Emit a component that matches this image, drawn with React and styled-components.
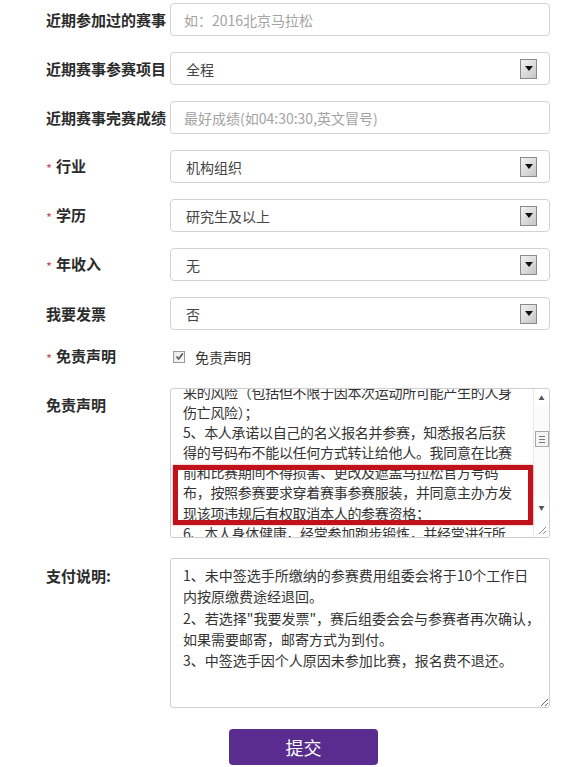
import React from 'react';
import styled, { createGlobalStyle } from 'styled-components';

const GlobalStyle = createGlobalStyle`
  html, body {
    margin: 0;
    padding: 0;
    background: #fff;
  }
  body {
    font-family: "Noto Sans CJK SC", "Liberation Sans", sans-serif;
    color: #333;
  }
`;

const Form = styled.form`
  padding: 3px 0 0 46px;
  width: 504px;
`;

const Row = styled.div`
  display: flex;
  align-items: ${(p) => (p.top ? 'flex-start' : 'center')};
  margin-bottom: ${(p) => p.gap || 16}px;
`;

const Label = styled.div`
  width: 124px;
  flex: none;
  font-size: 15px;
  font-weight: 700;
  line-height: 20px;
  color: #2b2b2b;
  white-space: nowrap;
  padding-top: ${(p) => p.pad || 0}px;
`;

const Star = styled.span`
  color: #c8505a;
  font-size: 13px;
  font-weight: 400;
  margin-right: 4px;
  position: relative;
  top: 2px;
`;

const Input = styled.input`
  box-sizing: border-box;
  width: 380px;
  height: 33px;
  border: 1px solid #d2d2d2;
  border-radius: 4px;
  padding: 0 13px;
  font-family: inherit;
  font-size: 14px;
  color: #444;
  outline: none;
  &::placeholder {
    color: #a3a3a3;
  }
`;

const SelectBox = styled.div`
  box-sizing: border-box;
  width: 380px;
  height: 33px;
  border: 1px solid #d2d2d2;
  border-radius: 4px;
  padding: 0 12px 0 15px;
  display: flex;
  align-items: center;
  justify-content: space-between;
  font-size: 14px;
  color: #444;
`;

const ArrowBox = styled.span`
  box-sizing: border-box;
  width: 17px;
  height: 20px;
  border: 1px solid #8a8a8a;
  background: linear-gradient(135deg, #f2f2f2 0%, #d8d8d8 60%, #c4c4c4 100%);
  display: flex;
  align-items: center;
  justify-content: center;
`;

const Caret = styled.span`
  width: 0;
  height: 0;
  border-left: 4px solid transparent;
  border-right: 4px solid transparent;
  border-top: 5px solid #111;
`;

const CheckLine = styled.label`
  display: flex;
  align-items: center;
  height: 20px;
  font-size: 14px;
  color: #333;
`;

const CheckMark = styled.span`
  box-sizing: border-box;
  width: 12px;
  height: 12px;
  margin: 0 10px 0 3px;
  border: 1px solid #9a9a9a;
  background: linear-gradient(135deg, #e9e9e9, #fafafa);
  display: flex;
  align-items: center;
  justify-content: center;
`;

const FieldWrap = styled.div`
  position: relative;
  width: 380px;
`;

const Frame = styled.div`
  box-sizing: border-box;
  width: 380px;
  height: 150px;
  border: 1px solid #cfcfcf;
  border-radius: 3px;
  display: flex;
  overflow: hidden;
`;

const Viewport = styled.div`
  flex: 1;
  overflow: hidden;
  padding-left: 12px;
`;

const ScrollText = styled.div`
  font-size: 14px;
  line-height: 20.1px;
  letter-spacing: -0.3px;
  color: #333;
  white-space: pre;
`;

const ScrollBar = styled.div`
  width: 15px;
  flex: none;
  display: flex;
  flex-direction: column;
  border-left: 1px solid #eaeaea;
`;

const ScrollBtn = styled.div`
  height: 16px;
  display: flex;
  align-items: center;
  justify-content: center;
  font-size: 6px;
  color: #555;
`;

const Track = styled.div`
  flex: 1;
  display: flex;
  flex-direction: column;
  align-items: center;
  background: #fbfbfb;
`;

const Thumb = styled.div`
  box-sizing: border-box;
  width: 14px;
  height: 16px;
  border: 1px solid #a8a8a8;
  background: #f4f4f4;
  display: flex;
  flex-direction: column;
  align-items: center;
  justify-content: center;
  gap: 2px;
`;

const Grip = styled.span`
  width: 6px;
  height: 1px;
  background: #777;
`;

const Corner = styled.div`
  height: 20px;
  display: flex;
  align-items: flex-end;
  justify-content: flex-end;
  padding: 0 2px 2px 0;
`;

const Highlight = styled.div`
  position: absolute;
  left: 3px;
  top: 77px;
  width: 360px;
  height: 60px;
  box-sizing: border-box;
  border: 5px solid #c1121c;
  box-shadow: 0 0 2px rgba(193, 18, 28, 0.5);
  pointer-events: none;
`;

const TextArea = styled.textarea`
  box-sizing: border-box;
  width: 380px;
  height: 150px;
  border: 1px solid #cfcfcf;
  border-radius: 3px;
  padding: 6px 12px;
  margin: 0;
  font-family: inherit;
  font-size: 14px;
  line-height: 21.3px;
  color: #333;
  white-space: pre;
  overflow: hidden;
  resize: both;
  outline: none;
  display: block;
`;

const ButtonRow = styled.div`
  display: flex;
  padding-left: 183px;
`;

const Submit = styled.button`
  width: 149px;
  height: 36px;
  border: none;
  border-radius: 4px;
  background: #5a2c90;
  color: #fff;
  font-family: inherit;
  font-size: 18px;
  cursor: pointer;
`;

const waiver = [
  '来的风险（包括但不限于因本次运动所可能产生的人身',
  '伤亡风险）；',
  '5、本人承诺以自己的名义报名并参赛，知悉报名后获',
  '得的号码布不能以任何方式转让给他人。我同意在比赛',
  '前和比赛期间不得损害、更改及遮盖马拉松官方号码',
  '布，按照参赛要求穿着赛事参赛服装，并同意主办方发',
  '现该项违规后有权取消本人的参赛资格；',
  '6、本人身体健康，经常参加跑步锻炼，并经常进行所',
].join('\n');

const payment = [
  '1、未中签选手所缴纳的参赛费用组委会将于10个工作日',
  '内按原缴费途经退回。',
  '2、若选择"我要发票"，赛后组委会会与参赛者再次确认，',
  '如果需要邮寄，邮寄方式为到付。',
  '3、中签选手因个人原因未参加比赛，报名费不退还。',
].join('\n');

function Select({ value }) {
  return (
    <SelectBox>
      <span>{value}</span>
      <ArrowBox>
        <Caret />
      </ArrowBox>
    </SelectBox>
  );
}

function FieldLabel({ required, children, pad }) {
  return (
    <Label pad={pad}>
      {required && <Star>*</Star>}
      {children}
    </Label>
  );
}

function ScrollArea({ text, offset, thumbAt }) {
  return (
    <Frame>
      <Viewport>
        <ScrollText style={{ marginTop: -offset }}>{text}</ScrollText>
      </Viewport>
      <ScrollBar>
        <ScrollBtn>▲</ScrollBtn>
        <Track>
          <Thumb style={{ marginTop: thumbAt }}>
            <Grip />
            <Grip />
            <Grip />
          </Thumb>
        </Track>
        <ScrollBtn>▼</ScrollBtn>
        <Corner>
          <svg width="9" height="9" viewBox="0 0 9 9">
            <path d="M8 1L1 8M8 5L5 8" stroke="#888" strokeWidth="1" />
          </svg>
        </Corner>
      </ScrollBar>
    </Frame>
  );
}

function App() {
  return (
    <>
      <GlobalStyle />
      <Form onSubmit={(e) => e.preventDefault()}>
        <Row>
          <FieldLabel>近期参加过的赛事</FieldLabel>
          <Input placeholder="如：2016北京马拉松" />
        </Row>
        <Row>
          <FieldLabel>近期赛事参赛项目</FieldLabel>
          <Select value="全程" />
        </Row>
        <Row>
          <FieldLabel>近期赛事完赛成绩</FieldLabel>
          <Input placeholder="最好成绩(如04:30:30,英文冒号)" />
        </Row>
        <Row>
          <FieldLabel required>行业</FieldLabel>
          <Select value="机构组织" />
        </Row>
        <Row>
          <FieldLabel required>学历</FieldLabel>
          <Select value="研究生及以上" />
        </Row>
        <Row>
          <FieldLabel required>年收入</FieldLabel>
          <Select value="无" />
        </Row>
        <Row>
          <FieldLabel>我要发票</FieldLabel>
          <Select value="否" />
        </Row>
        <Row gap={21}>
          <FieldLabel required>免责声明</FieldLabel>
          <CheckLine>
            <CheckMark>
              <svg width="9" height="9" viewBox="0 0 9 9">
                <path d="M1.5 4.5L3.6 7L7.8 1.5" fill="none" stroke="#555" strokeWidth="1.6" />
              </svg>
            </CheckMark>
            免责声明
          </CheckLine>
        </Row>
        <Row top gap={20}>
          <FieldLabel pad={7}>免责声明</FieldLabel>
          <FieldWrap>
            <ScrollArea text={waiver} offset={7} thumbAt={26} />
            <Highlight />
          </FieldWrap>
        </Row>
        <Row top gap={21}>
          <FieldLabel pad={8}>支付说明:</FieldLabel>
          <TextArea readOnly value={payment} />
        </Row>
        <ButtonRow>
          <Submit type="submit">提交</Submit>
        </ButtonRow>
      </Form>
    </>
  );
}

export default App;
